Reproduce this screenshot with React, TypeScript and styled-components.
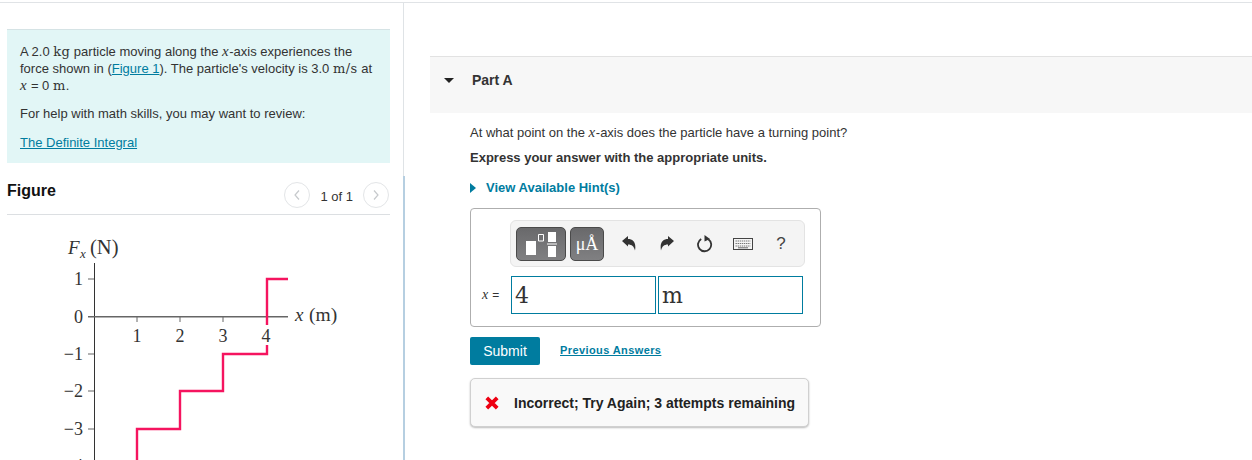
import React from 'react';
import styled, { createGlobalStyle } from 'styled-components';

const GlobalStyle = createGlobalStyle`
  html, body {
    margin: 0;
    height: 460px;
    overflow: hidden;
    background: #fff;
    font-family: 'Liberation Sans', Arial, sans-serif;
    color: #333;
  }
`;

const Page = styled.div`
  width: 1252px;
  height: 460px;
  overflow: hidden;
  padding-top: 2px;
  box-sizing: border-box;
`;

const Columns = styled.div`
  display: grid;
  grid-template-columns: 404px 1fr;
  height: 458px;
  border-top: 1px solid #e0e3e6;
`;

const LeftColumn = styled.div`
  display: flex;
  flex-direction: column;
`;

const IntroSection = styled.section`
  height: 173px;
  box-sizing: border-box;
  padding: 26px 13px 0 7px;
  border-right: 1px solid #dfe3e6;
`;

const IntroBox = styled.div`
  height: 134px;
  box-sizing: border-box;
  padding: 13px 13px 0;
  background: #e2f6f6;
  border-top: 1px solid #d5e3e5;
  font-size: 13px;
  line-height: 17px;
`;

const IntroPara = styled.p<{ $gap: number }>`
  margin: 0 0 ${(p) => p.$gap}px;
`;

const Link = styled.a`
  color: #007c9f;
  text-decoration: underline;
`;

const Math = styled.span`
  font-family: 'DejaVu Serif', 'Liberation Serif', serif;
  font-size: 13px;
  line-height: 1;
  letter-spacing: 0.4px;
`;

const MathVar = styled.span`
  font-family: 'Liberation Serif', serif;
  font-size: 15px;
  line-height: 0;
  font-style: italic;
  letter-spacing: 0.6px;
`;

const FigureSection = styled.section`
  flex: 1;
  min-height: 0;
  overflow: hidden;
  padding: 0 13px 0 7px;
  border-right: 2px solid #b6cfe1;
  margin-right: -1px;
`;

const FigureHeader = styled.div`
  display: flex;
  align-items: center;
  justify-content: space-between;
  height: 38px;
  border-bottom: 1px solid #dcdfe2;
  padding-right: 1px;
`;

const FigureTitle = styled.h3`
  margin: 0 0 8px;
  font-size: 16px;
  line-height: 20px;
  font-weight: 700;
  color: #111;
`;

const Pager = styled.div`
  display: flex;
  align-items: center;
  gap: 10px;
  font-size: 13px;
  color: #333;
`;

const PagerCount = styled.span`
  margin-top: 3px;
`;

const PagerButton = styled.span`
  display: flex;
  align-items: center;
  justify-content: center;
  width: 26px;
  height: 26px;
  box-sizing: border-box;
  border: 1px solid #e3e5e7;
  border-radius: 50%;
`;

const GraphWrap = styled.div`
  height: 246px;
`;

const RightColumn = styled.div`
  padding: 53px 0 0 26px;
`;

const PartHeader = styled.div`
  display: flex;
  height: 57px;
  box-sizing: border-box;
  padding: 15px 0 0 14px;
  gap: 18px;
  background: #f7f7f7;
  border-top: 1px solid #e2e2e2;
  font-size: 14px;
  line-height: 17px;
  font-weight: 700;
  color: #333;
`;

const PartCaret = styled.span`
  width: 0;
  height: 0;
  margin-top: 6px;
  border-left: 5.5px solid transparent;
  border-right: 5.5px solid transparent;
  border-top: 5.5px solid #222;
`;

const PartBody = styled.div`
  padding: 11px 0 0 40px;
`;

const Question = styled.p`
  margin: 0 0 8px;
  font-size: 13px;
  line-height: 17px;
`;

const Instruction = styled.p`
  margin: 0 0 13px;
  font-size: 13px;
  line-height: 17px;
  font-weight: 700;
`;

const HintRow = styled.div`
  display: flex;
  align-items: center;
  gap: 10px;
  height: 17px;
  font-size: 13px;
  font-weight: 700;
  color: #007c9f;
`;

const HintCaret = styled.span`
  width: 0;
  height: 0;
  border-top: 5px solid transparent;
  border-bottom: 5px solid transparent;
  border-left: 6px solid #007c9f;
`;

const AnswerBox = styled.div`
  width: 351px;
  height: 119px;
  box-sizing: border-box;
  margin-top: 12px;
  padding: 11px 0 0 39px;
  border: 1px solid #aeaeae;
  border-radius: 4px;
`;

const Toolbar = styled.div`
  display: flex;
  align-items: center;
  width: 295px;
  height: 47px;
  box-sizing: border-box;
  padding-left: 5px;
  background: #f4f4f4;
  border: 1px solid #e3e3e3;
  border-radius: 6px;
`;

const TemplateButton = styled.span<{ $width: number }>`
  display: flex;
  align-items: center;
  justify-content: center;
  width: ${(p) => p.$width}px;
  height: 34px;
  box-sizing: border-box;
  margin-right: 4px;
  padding-top: 2px;
  border: 1px solid #4a4a4a;
  border-radius: 5px;
  background: linear-gradient(#69696b, #808082);
  color: #fff;
  font-family: 'Liberation Serif', serif;
  font-size: 18px;
`;

const ToolIcons = styled.div`
  display: flex;
  align-items: center;
  margin-left: 2px;
`;

const ToolIcon = styled.span`
  display: flex;
  align-items: center;
  justify-content: center;
  width: 38px;
  height: 34px;
  font-size: 17px;
  color: #444;
`;

const InputRow = styled.div`
  display: flex;
  align-items: center;
  margin: 9px 0 0 -28px;
`;

const InputLabel = styled.span`
  width: 29px;
  font-size: 12px;
  color: #333;
`;

const LabelVar = styled.span`
  font-family: 'Liberation Serif', serif;
  font-size: 14px;
  font-style: italic;
  letter-spacing: 0.6px;
`;

const Field = styled.div`
  width: 145px;
  height: 38px;
  box-sizing: border-box;
  margin-right: 2px;
  padding: 6px 0 0 3px;
  border: 1px solid #007c9f;
  font-family: 'DejaVu Serif', 'Liberation Serif', serif;
  font-size: 22px;
  line-height: 26px;
  color: #333;
`;

const ActionRow = styled.div`
  display: flex;
  align-items: center;
  gap: 20px;
  margin-top: 10px;
`;

const SubmitButton = styled.button`
  width: 70px;
  height: 28px;
  padding: 0;
  border: 0;
  border-radius: 2px;
  background: #007c9f;
  color: #fff;
  font-family: inherit;
  font-size: 14px;
`;

const PreviousLink = styled(Link)`
  font-size: 11px;
  font-weight: 700;
  letter-spacing: 0.4px;
  margin-top: -2px;
`;

const Feedback = styled.div`
  display: flex;
  align-items: center;
  gap: 15px;
  width: 339px;
  height: 49px;
  box-sizing: border-box;
  margin-top: 13px;
  padding-left: 14px;
  background: #f9f9f9;
  border: 1px solid #d0d0d0;
  border-radius: 5px;
  box-shadow: 0 1px 2px #bbb;
  font-size: 14px;
  font-weight: 700;
  color: #222;
`;

const Chevron = ({ left }: { left?: boolean }) => (
  <svg width="8" height="12" viewBox="0 0 8 12">
    <path d={left ? 'M6 1.5 2 6l4 4.5' : 'M2 1.5 6 6l-4 4.5'} fill="none" stroke="#c6c9cc" strokeWidth="1.2" />
  </svg>
);

const tickXs = [137, 180, 223, 266];
const tickYs: [number, string][] = [
  [278, '1'],
  [316, '0'],
  [353, '−1'],
  [390, '−2'],
  [428, '−3'],
  [465, '−4'],
];

// graph coordinates are page pixels, the viewBox starts where the wrap does
const ForceGraph = () => (
  <svg width="390" height="246" viewBox="0 214 390 246" style={{ display: 'block', marginLeft: -7 }}>
    <g fontFamily="'Liberation Serif', serif" fill="#333" fontSize="18">
      <text x="68" y="253" fontStyle="italic" fontSize="19">F</text>
      <text x="80" y="257" fontStyle="italic" fontSize="13">x</text>
      <text x="90" y="253" fontSize="20.5">(N)</text>
      {tickYs.map(([y, label]) => (
        <text key={label} x="83" y={y + 6} textAnchor="end">{label}</text>
      ))}
      {tickXs.map((x, i) => (
        <text key={x} x={x} y="341" textAnchor="middle">{i + 1}</text>
      ))}
      <text x="295" y="320" fontStyle="italic" fontSize="19">x</text>
      <text x="309" y="320" fontSize="19.5">(m)</text>
    </g>
    <path d="M94.5 262V460" stroke="#333" strokeWidth="1" fill="none" />
    <path d="M88 278h6M88 353h6M88 390h6M88 428h6" stroke="#666" strokeWidth="1.2" fill="none" />
    <path d="M88 315.700h200" stroke="#666" strokeWidth="1.500" fill="none" />
    <path d="M137 316v5M180 316v5M223 316v5" stroke="#666" strokeWidth="1" fill="none" />
    <path
      d="M137 460V428H180V390H223V353H267V344M267 324V278H288"
      fill="none"
      stroke="#f5145f"
      strokeWidth="2.400"
    />
  </svg>
);

const TemplateGlyph = () => (
  <svg width="31" height="25" viewBox="0 0 31 25">
    <path d="M0 9h10v14H0zM22 0h8v10h-8zM22 14h8v11h-8z" fill="#fff" />
    <path d="M12.500 2.500h5v6.500h-5z" fill="none" stroke="#fff" />
    <path d="M21 12h10" stroke="#fff" />
  </svg>
);

const UndoIcon = () => (
  <svg width="14" height="15" viewBox="0 0 14 15">
    <path d="M0 5 6 0V3C11 3 14.500 6.500 13 14.500C12 10.500 10 8.500 6 8.500V10.500Z" fill="#333" />
  </svg>
);

const RedoIcon = () => (
  <svg width="14" height="15" viewBox="0 0 14 15">
    <path d="M14 5 8 0V3C3 3 -0.500 6.500 1 14.500C2 10.500 4 8.500 8 8.500V10.500Z" fill="#333" />
  </svg>
);

const ResetIcon = () => (
  <svg width="16" height="18" viewBox="0 0 16 18">
    <path d="M11.300 4.200A6.600 6.600 0 1 1 4.200 4" fill="none" stroke="#333" strokeWidth="1.800" />
    <path d="M7.500 0 13 4 7.500 6.500Z" fill="#333" />
  </svg>
);

const KeyboardIcon = () => (
  <svg width="20" height="12" viewBox="0 0 20 12">
    <rect x="0.500" y="0.500" width="19" height="11" fill="#f4f4f4" stroke="#444" />
    <path d="M2.500 3h15M2.500 5.500h15M2.500 8h15" stroke="#777" strokeWidth="1.200" strokeDasharray="1.400 .7" />
    <path d="M5 9.800h10" stroke="#666" />
  </svg>
);

const CrossIcon = () => (
  <svg width="14" height="14" viewBox="0 0 14 14">
    <path d="M1.800 1.800 12.200 12.200M12.200 1.800 1.800 12.200" stroke="#ee0012" strokeWidth="3.800" />
  </svg>
);

const App: React.FC = () => (
  <Page>
    <GlobalStyle />
    <Columns>
      <LeftColumn>
        <IntroSection>
          <IntroBox>
            <IntroPara $gap={11}>
              A 2.0 <Math>kg</Math> particle moving along the <MathVar>x</MathVar>-axis experiences the force shown in (
              <Link>Figure 1</Link>). The particle's velocity is 3.0 <Math>m/s</Math> at <MathVar>x</MathVar> = 0{' '}
              <Math>m</Math>.
            </IntroPara>
            <IntroPara $gap={12}>For help with math skills, you may want to review:</IntroPara>
            <Link>The Definite Integral</Link>
          </IntroBox>
        </IntroSection>
        <FigureSection>
          <FigureHeader>
            <FigureTitle>Figure</FigureTitle>
            <Pager>
              <PagerButton>
                <Chevron left />
              </PagerButton>
              <PagerCount>1 of 1</PagerCount>
              <PagerButton>
                <Chevron />
              </PagerButton>
            </Pager>
          </FigureHeader>
          <GraphWrap>
            <ForceGraph />
          </GraphWrap>
        </FigureSection>
      </LeftColumn>
      <RightColumn>
        <PartHeader>
          <PartCaret />
          Part A
        </PartHeader>
        <PartBody>
          <Question>
            At what point on the <MathVar>x</MathVar>-axis does the particle have a turning point?
          </Question>
          <Instruction>Express your answer with the appropriate units.</Instruction>
          <HintRow>
            <HintCaret />
            View Available Hint(s)
          </HintRow>
          <AnswerBox>
            <Toolbar>
              <TemplateButton $width={50}>
                <TemplateGlyph />
              </TemplateButton>
              <TemplateButton $width={34}>μÅ</TemplateButton>
              <ToolIcons>
                <ToolIcon>
                  <UndoIcon />
                </ToolIcon>
                <ToolIcon>
                  <RedoIcon />
                </ToolIcon>
                <ToolIcon>
                  <ResetIcon />
                </ToolIcon>
                <ToolIcon>
                  <KeyboardIcon />
                </ToolIcon>
                <ToolIcon>?</ToolIcon>
              </ToolIcons>
            </Toolbar>
            <InputRow>
              <InputLabel>
                <LabelVar>x</LabelVar> =
              </InputLabel>
              <Field>4</Field>
              <Field>m</Field>
            </InputRow>
          </AnswerBox>
          <ActionRow>
            <SubmitButton>Submit</SubmitButton>
            <PreviousLink>Previous Answers</PreviousLink>
          </ActionRow>
          <Feedback>
            <CrossIcon />
            Incorrect; Try Again; 3 attempts remaining
          </Feedback>
        </PartBody>
      </RightColumn>
    </Columns>
  </Page>
);

export default App;
